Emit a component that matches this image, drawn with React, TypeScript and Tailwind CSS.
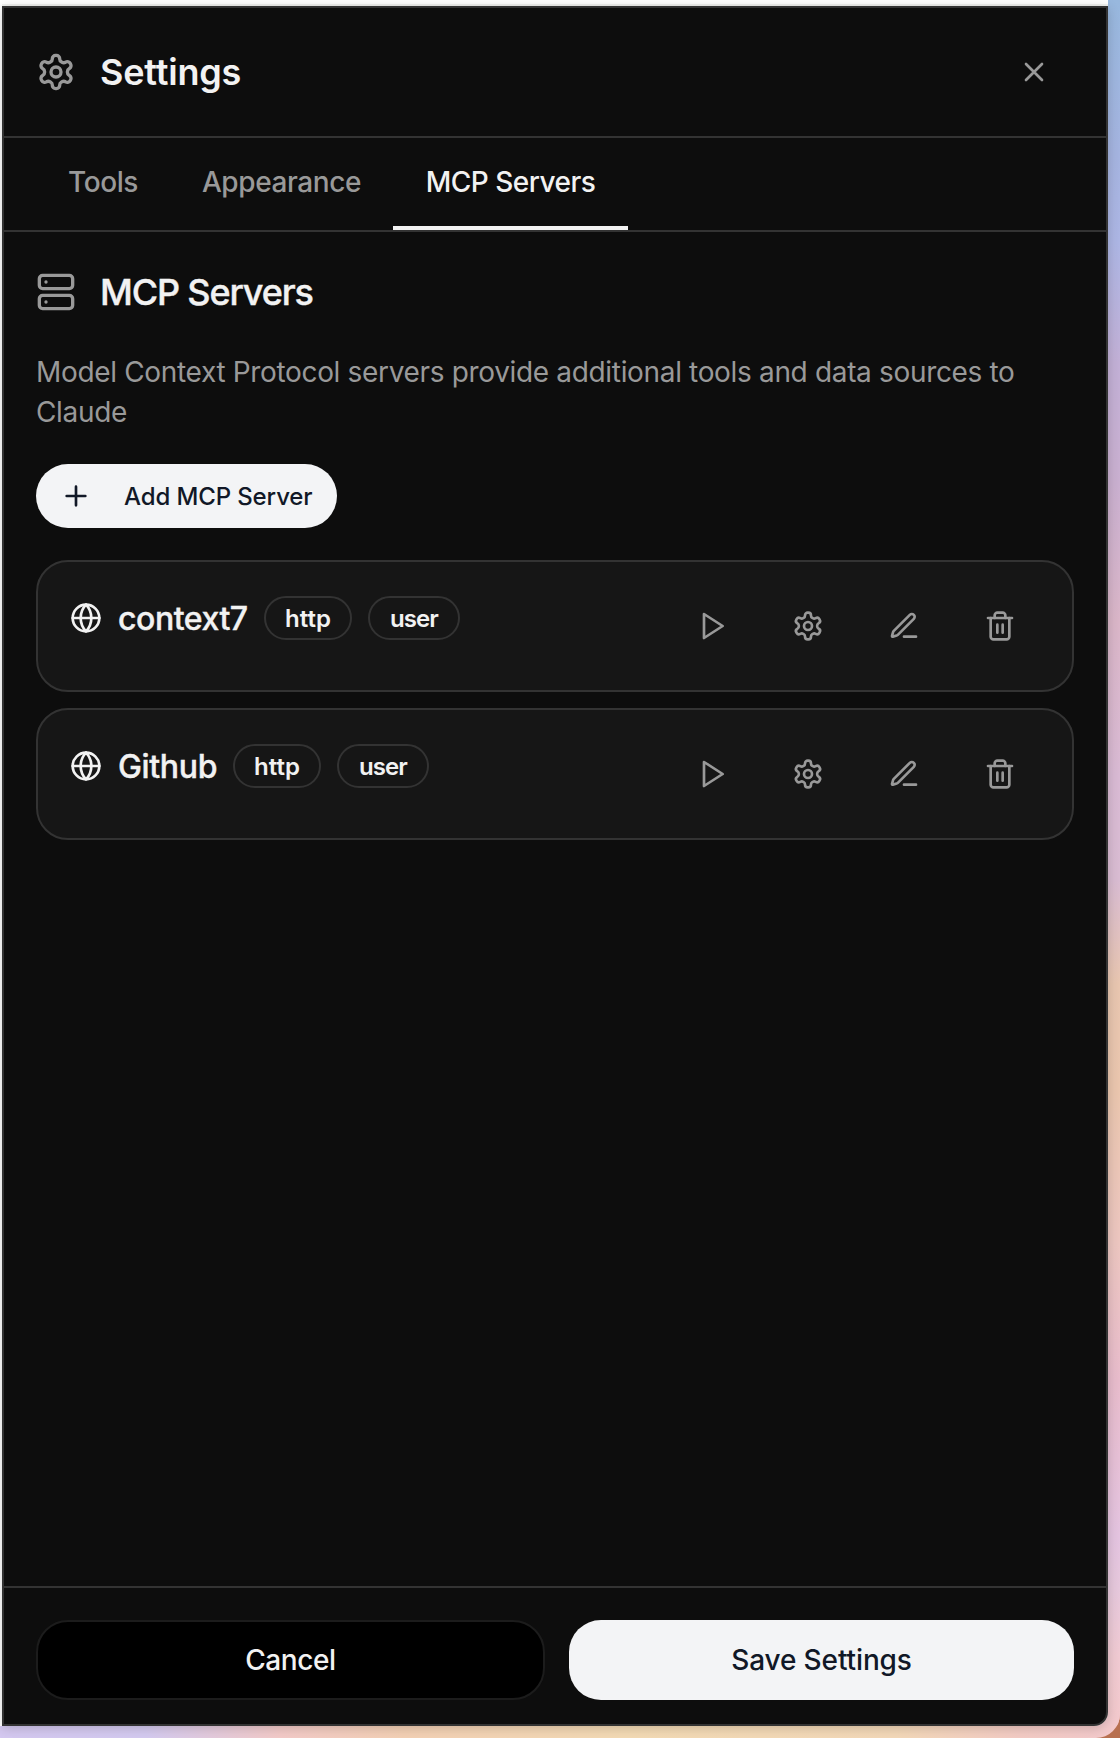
import type { ReactNode } from 'react'

type IconProps = { className: string; children: ReactNode }

function Icon({ className, children }: IconProps) {
  return (
    <svg
      viewBox="0 0 24 24"
      fill="none"
      stroke="currentColor"
      strokeWidth={2}
      strokeLinecap="round"
      strokeLinejoin="round"
      className={`shrink-0 ${className}`}
    >
      {children}
    </svg>
  )
}

function SettingsIcon({ className }: { className: string }) {
  return (
    <Icon className={className}>
      <path d="M12.22 2h-.44a2 2 0 0 0-2 2v.18a2 2 0 0 1-1 1.73l-.43.25a2 2 0 0 1-2 0l-.15-.08a2 2 0 0 0-2.73.73l-.22.38a2 2 0 0 0 .73 2.73l.15.1a2 2 0 0 1 1 1.72v.51a2 2 0 0 1-1 1.74l-.15.09a2 2 0 0 0-.73 2.73l.22.38a2 2 0 0 0 2.73.73l.15-.08a2 2 0 0 1 2 0l.43.25a2 2 0 0 1 1 1.73V20a2 2 0 0 0 2 2h.44a2 2 0 0 0 2-2v-.18a2 2 0 0 1 1-1.73l.43-.25a2 2 0 0 1 2 0l.15.08a2 2 0 0 0 2.73-.73l.22-.39a2 2 0 0 0-.73-2.73l-.15-.08a2 2 0 0 1-1-1.74v-.5a2 2 0 0 1 1-1.74l.15-.09a2 2 0 0 0 .73-2.73l-.22-.38a2 2 0 0 0-2.73-.73l-.15.08a2 2 0 0 1-2 0l-.43-.25a2 2 0 0 1-1-1.73V4a2 2 0 0 0-2-2z" />
      <circle cx="12" cy="12" r="3" />
    </Icon>
  )
}

function ServerIcon({ className }: { className: string }) {
  return (
    <Icon className={className}>
      <rect width="20" height="8" x="2" y="2" rx="2" ry="2" />
      <rect width="20" height="8" x="2" y="14" rx="2" ry="2" />
      <path d="M6 6h.01M6 18h.01" />
    </Icon>
  )
}

function ActionButton({ label, children }: { label: string; children: ReactNode }) {
  return (
    <button aria-label={label} className="flex h-16 w-20 items-center justify-center text-[#999999]">
      {children}
    </button>
  )
}

function ServerCard({ name, nameClass }: { name: string; nameClass: string }) {
  return (
    <div className="flex h-[132px] items-start justify-between rounded-[32px] border-2 border-[#333333] bg-[#161616] px-8 pt-8">
      <div className="flex items-center gap-4 pt-[2px] text-[#f2f2f2]">
        <Icon className="size-8">
          <circle cx="12" cy="12" r="10" />
          <path d="M12 2a14.5 14.5 0 0 0 0 20 14.5 14.5 0 0 0 0-20" />
          <path d="M2 12h20" />
        </Icon>
        <span className={`pt-0.5 text-[32px] leading-10 font-medium [-webkit-text-stroke:0.4px] ${nameClass}`}>{name}</span>
        <span className="flex h-11 w-[88px] items-center justify-center rounded-full border-2 border-[#333333] pt-0.5 text-2xl font-semibold">
          http
        </span>
        <span className="flex h-11 w-[92px] items-center justify-center rounded-full border-2 border-[#333333] pt-0.5 text-2xl font-semibold tracking-[-0.9px]">
          user
        </span>
      </div>
      <div className="flex gap-4">
        <ActionButton label="Test">
          <Icon className="size-8">
            <polygon points="6 3 20 12 6 21 6 3" />
          </Icon>
        </ActionButton>
        <ActionButton label="Configure">
          <SettingsIcon className="size-8" />
        </ActionButton>
        <ActionButton label="Edit">
          <Icon className="size-8">
            <path d="M12 20h9" />
            <path d="M16.376 3.622a1 1 0 0 1 3.002 3.002L7.368 18.635a2 2 0 0 1-.855.506l-2.872.838a.5.5 0 0 1-.62-.62l.838-2.872a2 2 0 0 1 .506-.854z" />
          </Icon>
        </ActionButton>
        <ActionButton label="Delete">
          <Icon className="size-8">
            <path d="M3 6h18" />
            <path d="M19 6v14c0 1-1 2-2 2H7c-1 0-2-1-2-2V6" />
            <path d="M8 6V4c0-1 1-2 2-2h4c1 0 2 1 2 2v2" />
            <path d="M10 11v6M14 11v6" />
          </Icon>
        </ActionButton>
      </div>
    </div>
  )
}

export default function App() {
  return (
    <div className="h-[1738px] w-[1120px] overflow-hidden bg-[#b87050] font-['Inter',sans-serif]">
      <div className="flex h-full flex-col overflow-hidden rounded-br-[24px] bg-[linear-gradient(90deg,#d4c8f0_0%,#d4caf0_13%,#f3cac8_25%,#f3d0b4_36%,#f3dab4_56%,#f3d8b8_80%,#f3cbc4_91%,#f3c9cc_100%)]">
        <div className="flex h-[1726px] bg-[linear-gradient(180deg,#98b8de_0%,#a5b4e0_9%,#adb6e4_14%,#c2b0d6_21%,#cab0d0_28%,#dab6c8_36%,#d9bad4_45%,#d9bcd2_51%,#e8c6b0_57%,#eac6ae_63%,#ecc6c0_72%,#e8bccc_80%,#e4c4e0_89%,#e6c8dc_92%,#f0cad2_96%,#f3c9cc_100%)]">
          <div className="flex h-full w-[1108px] flex-col rounded-br-[14px] bg-white pl-[2px] pt-1">
            <div className="h-[2px] shrink-0 bg-[#f0f1ef]" />
            <main className="flex min-h-0 flex-1 flex-col rounded-br-[14px] border-2 border-[#333333] bg-[#0d0d0d] shadow-[0_2px_12px_rgba(0,0,0,0.18)]">
              <header className="flex h-[130px] shrink-0 items-center border-b-2 border-[#333333] pl-8 pr-14">
                <SettingsIcon className="size-10 text-[#999999]" />
                <h1 className="ml-6 text-[36px] leading-none font-semibold tracking-[-0.2px] text-[#f2f2f2]">Settings</h1>
                <button aria-label="Close" className="ml-auto text-[#999999]">
                  <Icon className="size-8">
                    <path d="M18 6 6 18M6 6l12 12" />
                  </Icon>
                </button>
              </header>

              <nav className="flex h-[94px] shrink-0 border-b-2 border-[#333333] pl-8 text-[28px] font-medium text-[#999999]">
                <button className="w-[134px] pb-1 tracking-[-0.4px]">Tools</button>
                <button className="w-[223px] pb-1 tracking-[-0.4px]">Appearance</button>
                <button className="w-[235px] border-b-4 border-[#f2f2f2] tracking-[-0.5px] text-[#f2f2f2]">
                  MCP Servers
                </button>
              </nav>

              <section className="flex min-h-0 flex-1 flex-col px-8 pt-10">
                <div className="flex h-10 items-center text-[#999999]">
                  <ServerIcon className="size-10" />
                  <h2 className="ml-6 text-[36px] leading-none font-medium tracking-[-1.15px] text-[#f2f2f2] [-webkit-text-stroke:0.4px]">
                    MCP Servers
                  </h2>
                </div>
                <p className="mt-10 text-[28px] leading-10 tracking-[-0.335px] text-[#999999]">
                  Model Context Protocol servers provide additional tools and data sources to Claude
                </p>
                <button className="mt-8 flex h-16 w-[301px] shrink-0 items-center gap-8 rounded-full bg-[#f3f4f6] pl-6 text-2xl font-medium tracking-[-0.12px] text-[#111827]">
                  <Icon className="size-8">
                    <path d="M5 12h14M12 5v14" />
                  </Icon>
                  <span className="pt-0.5">Add MCP Server</span>
                </button>
                <div className="mt-8 flex flex-col gap-4">
                  <ServerCard name="context7" nameClass="w-[130px] tracking-[-0.45px]" />
                  <ServerCard name="Github" nameClass="w-[99px] tracking-[-0.35px]" />
                </div>
              </section>

              <footer className="flex shrink-0 gap-6 border-t-2 border-[#333333] px-8 pb-6 pt-8 text-[28px] font-medium">
                <button className="h-20 w-[509px] rounded-[32px] border-2 border-[#1c1c1c] bg-black tracking-[-0.4px] text-[#f2f2f2]">
                  Cancel
                </button>
                <button className="h-20 flex-1 rounded-[32px] bg-[#f3f4f6] tracking-[-0.12px] text-[#111827]">
                  Save Settings
                </button>
              </footer>
            </main>
          </div>
        </div>
      </div>
    </div>
  )
}
